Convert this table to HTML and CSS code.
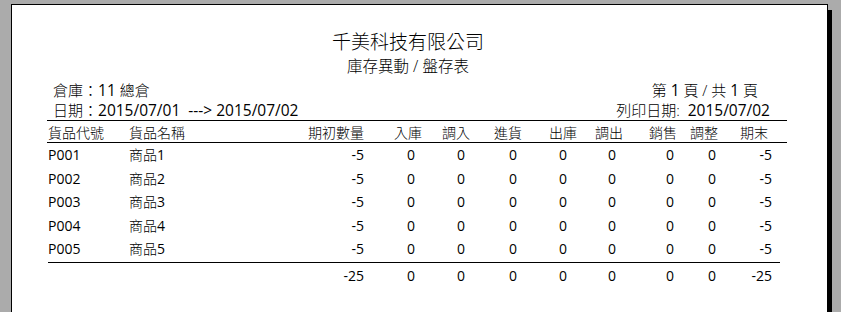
FILE: index.html
```html
<!DOCTYPE html>
<html lang="zh-Hant">
<head>
<meta charset="utf-8">
<title>庫存異動 / 盤存表</title>
<link rel="stylesheet" href="styles.css">
</head>
<body>
<div class="page">
  <div class="heading">
    <div class="company">千美科技有限公司</div>
    <div class="report">庫存異動 / 盤存表</div>
  </div>
  <div class="info">
    <div class="info-row">
      <span>倉庫：<span class="n">11</span> 總倉</span>
      <span class="pageno">第 <span class="n">1</span> 頁 / 共 <span class="n">1</span> 頁</span>
    </div>
    <div class="info-row">
      <span class="pre">日期：<span class="n">2015/07/01  ---&gt; 2015/07/02</span></span>
      <span class="pre">列印日期:  <span class="n">2015/07/02</span></span>
    </div>
  </div>
  <div class="table">
    <div class="grid head">
      <span class="l">貨品代號</span><span class="l">貨品名稱</span><span>期初數量</span><span>入庫</span><span>調入</span><span>進貨</span><span>出庫</span><span>調出</span><span>銷售</span><span>調整</span><span>期末</span>
    </div>
    <div class="body">
      <div class="grid row"><span class="l n">P001</span><span class="l">商品<span class="n">1</span></span><span class="n">-5</span><span class="n">0</span><span class="n">0</span><span class="n">0</span><span class="n">0</span><span class="n">0</span><span class="n">0</span><span class="n">0</span><span class="n">-5</span></div>
      <div class="grid row"><span class="l n">P002</span><span class="l">商品<span class="n">2</span></span><span class="n">-5</span><span class="n">0</span><span class="n">0</span><span class="n">0</span><span class="n">0</span><span class="n">0</span><span class="n">0</span><span class="n">0</span><span class="n">-5</span></div>
      <div class="grid row"><span class="l n">P003</span><span class="l">商品<span class="n">3</span></span><span class="n">-5</span><span class="n">0</span><span class="n">0</span><span class="n">0</span><span class="n">0</span><span class="n">0</span><span class="n">0</span><span class="n">0</span><span class="n">-5</span></div>
      <div class="grid row"><span class="l n">P004</span><span class="l">商品<span class="n">4</span></span><span class="n">-5</span><span class="n">0</span><span class="n">0</span><span class="n">0</span><span class="n">0</span><span class="n">0</span><span class="n">0</span><span class="n">0</span><span class="n">-5</span></div>
      <div class="grid row"><span class="l n">P005</span><span class="l">商品<span class="n">5</span></span><span class="n">-5</span><span class="n">0</span><span class="n">0</span><span class="n">0</span><span class="n">0</span><span class="n">0</span><span class="n">0</span><span class="n">0</span><span class="n">-5</span></div>
    </div>
    <div class="grid row total"><span></span><span></span><span class="n">-25</span><span class="n">0</span><span class="n">0</span><span class="n">0</span><span class="n">0</span><span class="n">0</span><span class="n">0</span><span class="n">0</span><span class="n">-25</span></div>
  </div>
</div>
</body>
</html>
```
FILE: styles.css
```css
html, body {
  margin: 0;
  padding: 0;
}
body {
  background: #ababab;
  padding: 4px 0 0 11px;
  height: 312px;
  overflow: hidden;
  box-sizing: border-box;
  font-family: "Open Sans", "Noto Sans CJK TC", sans-serif;
  font-weight: 300;
  color: #000;
}
.n {
  font-weight: 400;
}
.page {
  width: 815px;
  height: 400px;
  background: #fff;
  border: 1px solid #000;
  box-shadow: 4px 6px 0 0 #000;
}
.heading {
  padding-top: 25px;
  margin-right: 23px;
  text-align: center;
}
.company {
  font-size: 19px;
  line-height: 24px;
}
.report {
  font-size: 15.5px;
  line-height: 24px;
}
.info {
  margin: 2px 0 0 41px;
  width: 717px;
  font-size: 15px;
}
.info .n {
  font-size: 15.5px;
}
.info-row {
  display: flex;
  justify-content: space-between;
  align-items: baseline;
  line-height: 20px;
}
.pre {
  white-space: pre;
}
.pageno {
  margin-right: 12px;
}
.table {
  margin-left: 35px;
  width: 740px;
  font-size: 14px;
}
.grid {
  display: grid;
  grid-template-columns: 81px 150px 85px 58px 48px 52px 55px 46px 54px 41px 54px;
  padding-left: 1px;
}
.grid > span {
  text-align: right;
  white-space: nowrap;
}
.grid > .l {
  text-align: left;
}
.head {
  border-top: 1px solid #000;
  border-bottom: 1px solid #000;
  padding-top: 2px;
  line-height: 19px;
}
.head > span:nth-child(11) {
  padding-right: 4px;
}
.row {
  line-height: 23.5px;
}
.row > span:nth-child(4) { padding-right: 7px; }
.row > span:nth-child(5) { padding-right: 5px; }
.row > span:nth-child(6) { padding-right: 5px; }
.row > span:nth-child(7) { padding-right: 10px; }
.row > span:nth-child(8) { padding-right: 7px; }
.row > span:nth-child(9) { padding-right: 3px; }
.row > span:nth-child(10) { padding-right: 2px; }
.body {
  padding-bottom: 1.5px;
}
.total {
  width: 732px;
  margin-left: 1px;
  padding-left: 0;
  border-top: 1px solid #000;
  line-height: 26px;
}
```
